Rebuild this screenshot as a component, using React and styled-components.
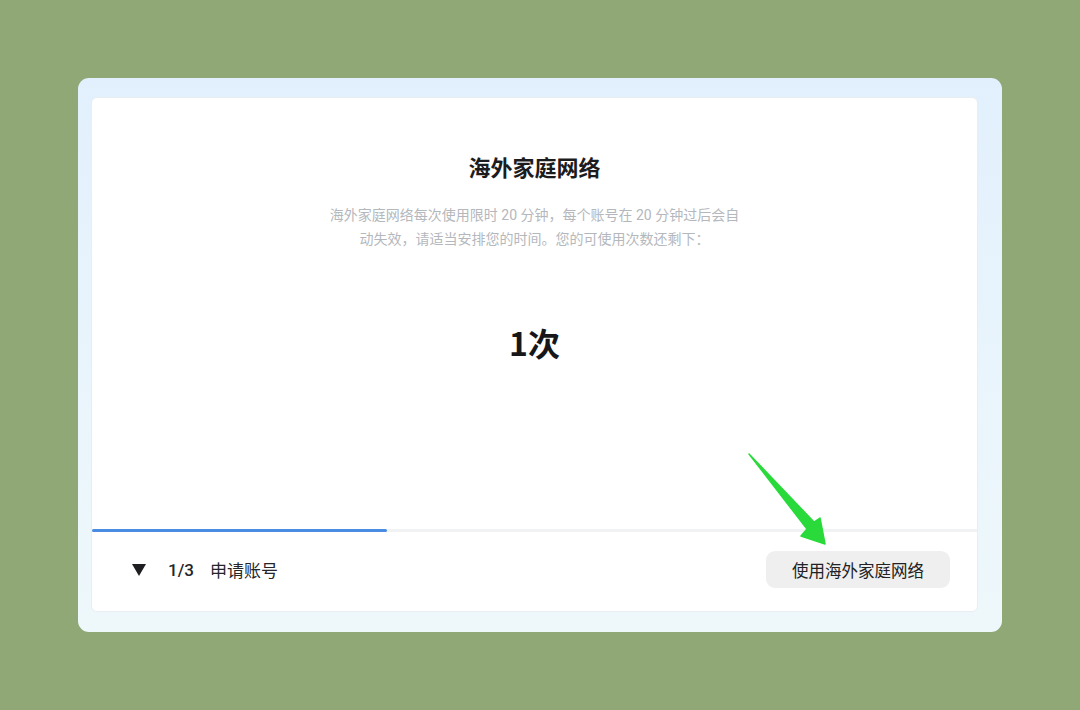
import styled, { createGlobalStyle } from 'styled-components';

const GlobalStyle = createGlobalStyle`
    html, body {
        margin: 0;
        padding: 0;
        background: #8fa876;
    }
    body {
        font-family: Roboto, "Noto Sans CJK SC", sans-serif;
    }
`;

const App = () => {
    const step = 1;
    const total = 3;

    return (
        <>
            <GlobalStyle />
            <Page>
                <Frame>
                    <Card>
                        <Main>
                            <Title>海外家庭网络</Title>
                            <Description>
                                海外家庭网络每次使用限时 20 分钟，每个账号在 20 分钟过后会自
                                <br />
                                动失效，请适当安排您的时间。您的可使用次数还剩下：
                            </Description>
                            <Count>1次</Count>
                        </Main>
                        <Progress>
                            <ProgressFill style={{ width: `${(step / total) * 100}%` }} />
                        </Progress>
                        <Footer>
                            <StepInfo>
                                <Caret />
                                <StepNumber>{step}/{total}</StepNumber>
                                <StepLabel>申请账号</StepLabel>
                            </StepInfo>
                            <ActionButton>使用海外家庭网络</ActionButton>
                        </Footer>
                        <Pointer viewBox="0 0 80 95" width="80" height="95">
                            <polygon
                                points="2,2 67,70 73,66 78,92 54,84 60,77"
                                fill="#29da3a"
                                stroke="#29da3a"
                                strokeWidth="1.5"
                                strokeLinejoin="round"
                            />
                        </Pointer>
                    </Card>
                </Frame>
            </Page>
        </>
    );
};

export default App;

const Page = styled.div`
    width: 1080px;
    height: 710px;
    display: flex;
    align-items: center;
    justify-content: center;
`;

const Frame = styled.div`
    width: 924px;
    height: 554px;
    box-sizing: border-box;
    padding: 19px 24px 20px 13px;
    border-radius: 11px;
    background: linear-gradient(180deg, #e2f0fd 0%, #eaf5fc 60%, #eef8fb 100%);
    display: flex;
`;

const Card = styled.div`
    position: relative;
    flex: 1;
    display: flex;
    flex-direction: column;
    background: #ffffff;
    border-radius: 6px;
    border: 1px solid #e9eef2;
    overflow: hidden;
`;

const Main = styled.div`
    flex: 1;
    display: flex;
    flex-direction: column;
    align-items: center;
    padding-top: 53px;
`;

const Title = styled.h1`
    margin: 0;
    font-family: "Noto Sans CJK SC", sans-serif;
    font-size: 22px;
    line-height: 30px;
    font-weight: 700;
    color: #1c1c1e;
`;

const Description = styled.p`
    margin: 22px 0 0;
    font-family: Roboto, "Noto Sans CJK SC", sans-serif;
    font-size: 14px;
    line-height: 24px;
    color: #b4b8bd;
    text-align: center;
`;

const Count = styled.div`
    margin-top: 69px;
    font-family: "Noto Sans CJK SC", sans-serif;
    font-size: 32px;
    line-height: 44px;
    font-weight: 700;
    color: #17171a;
`;

const Progress = styled.div`
    height: 3px;
    background: #f0f2f4;
`;

const ProgressFill = styled.div`
    height: 100%;
    background: #4a8be3;
    border-radius: 2px;
`;

const Footer = styled.div`
    height: 79px;
    box-sizing: border-box;
    padding: 0 27px 4px 40px;
    display: flex;
    align-items: center;
    justify-content: space-between;
`;

const StepInfo = styled.div`
    display: flex;
    align-items: center;
    color: #26262a;
    font-size: 17px;
    font-weight: 400;
`;

const Caret = styled.span`
    width: 0;
    height: 0;
    border-left: 7px solid transparent;
    border-right: 7px solid transparent;
    border-top: 12px solid #1f1f21;
    margin-right: 22px;
`;

const StepNumber = styled.span`
    font-family: Roboto, sans-serif;
    font-weight: 500;
    margin-right: 16px;
`;

const StepLabel = styled.span`
    font-family: "Noto Sans CJK SC", sans-serif;
`;

const ActionButton = styled.button`
    height: 37px;
    padding: 0 26px;
    border: none;
    border-radius: 9px;
    background: #efefef;
    color: #222224;
    font-family: "Noto Sans CJK SC", sans-serif;
    font-size: 16.5px;
    font-weight: 400;
    cursor: pointer;
`;

const Pointer = styled.svg`
    position: absolute;
    left: 655px;
    top: 354px;
    pointer-events: none;
`;
